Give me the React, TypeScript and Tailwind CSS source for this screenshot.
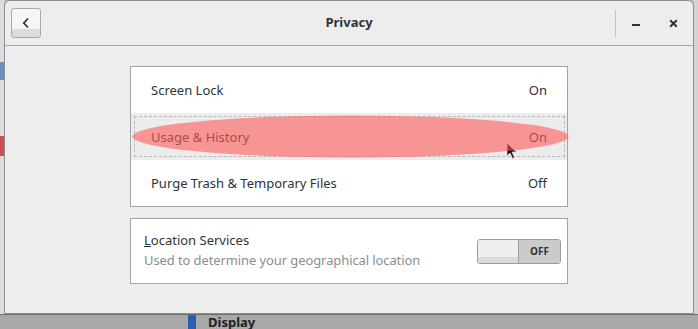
const font = { fontFamily: '"Noto Sans", "DejaVu Sans", sans-serif' };

function Row({ label, value, h, active }: { label: string; value: string; h: string; active?: boolean }) {
  return (
    <div className={`relative ${h} flex items-center justify-between px-[20px] pt-[2px] ${active ? "bg-[#ececec]" : ""}`}>
      {active && (
        <div className="absolute left-[3px] right-[2px] top-[3px] bottom-[3px] border border-dashed border-[#b9b9b9]" />
      )}
      <span className="relative">{label}</span>
      <span className="relative">{value}</span>
    </div>
  );
}

function Cursor() {
  return (
    <svg className="absolute left-[375px] top-[75px]" width="12" height="18" viewBox="0 0 12 18">
      <path d="M1 1 L1 14 L4 11 L6.5 16.5 L8.5 15.5 L6 10 L10.5 10 Z" fill="#111" stroke="#ddd" strokeWidth="0.8" />
    </svg>
  );
}

export default function App() {
  return (
    <div className="w-[698px] h-[329px] bg-[#bdbdbd] overflow-hidden flex flex-col" style={font}>
      <div className="flex h-[326px]">
        {/* strip of the desktop behind the window */}
        <div className="w-[4px] flex flex-col bg-[#dcdcdc]">
          <div className="h-[62px]" />
          <div className="h-[18px] bg-[#6b8fc4]" />
          <div className="h-[56px]" />
          <div className="h-[20px] bg-[#c85050]" />
        </div>
        <div className="w-[690px] border border-[#8e8e8e] rounded-t-[6px] bg-[#ededed] flex flex-col text-[13px] text-[#2e3436]">
          <div className="h-[45px] shrink-0 border-b border-[#a5a5a5] flex items-center pl-[6px]">
            <button className="w-[30px] h-[30px] rounded-[3px] border border-[#a8a8a8] bg-gradient-to-b from-[#f6f6f6] from-70% to-[#dcdcdc] to-70% flex items-center justify-center">
              <svg width="10" height="12" viewBox="0 0 10 12">
                <path d="M7 1.5 L2.8 6 L7 10.5" fill="none" stroke="#2e3436" strokeWidth="1.8" />
              </svg>
            </button>
            <div className="flex-1 text-center font-bold pl-[42px]">Privacy</div>
            <div className="w-px h-[27px] bg-[#c4c4c4]" />
            <div className="w-[77px] flex items-center">
              <div className="ml-[16px] mt-[3px] w-[8px] h-[2px] bg-[#2e3436]" />
              <svg className="ml-[29px]" width="9" height="9" viewBox="0 0 9 9">
                <path d="M1.2 1.2 L7.8 7.8 M7.8 1.2 L1.2 7.8" stroke="#2e3436" strokeWidth="2" />
              </svg>
            </div>
          </div>
          <div className="flex flex-col items-center pt-[20px] gap-[11px]">
            <div className="relative w-[438px] border border-[#a3a3a3] bg-white">
              <Row label="Screen Lock" value="On" h="h-[46px]" />
              <Row label="Usage & History" value="On" h="h-[47px]" active />
              <Row label="Purge Trash & Temporary Files" value="Off" h="h-[46px]" />
              <Cursor />
              <svg className="absolute left-[1px] top-[48px]" width="437" height="43" viewBox="0 0 437 43">
                <ellipse cx="218.5" cy="21.5" rx="218" ry="21" fill="#ff5a5a" fillOpacity="0.6" />
              </svg>
            </div>
            <div className="w-[438px] h-[66px] border border-[#a3a3a3] bg-white flex items-center justify-between pl-[13px] pr-[6px]">
              <div className="flex flex-col leading-[20px] pb-[2px]">
                <span>
                  <span className="underline">L</span>ocation Services
                </span>
                <span className="text-[#8b8e8f] tracking-[-0.1px]">Used to determine your geographical location</span>
              </div>
              <div className="w-[84px] h-[25px] rounded-[3px] border border-[#9a9a9a] flex overflow-hidden">
                <div className="w-[41px] border-r border-[#a0a0a0] bg-gradient-to-b from-[#efefef] from-75% to-[#dcdcdc] to-75%" />
                <div className="flex-1 bg-[#cbcbcb] flex items-center justify-center text-[10px] font-bold text-[#2e3436]">
                  OFF
                </div>
              </div>
            </div>
          </div>
        </div>
        <div className="flex-1 bg-[#d4d4d4]" />
      </div>
      <div className="flex-1 border-t border-[#6e6e6e] bg-[#a9a9a9] flex">
        <div className="w-[188px]" />
        <div className="w-[8px] bg-[#2a5db0]" />
        <div className="ml-[12px] text-[13px] font-bold text-[#222] leading-[14px]">Display</div>
      </div>
    </div>
  );
}
